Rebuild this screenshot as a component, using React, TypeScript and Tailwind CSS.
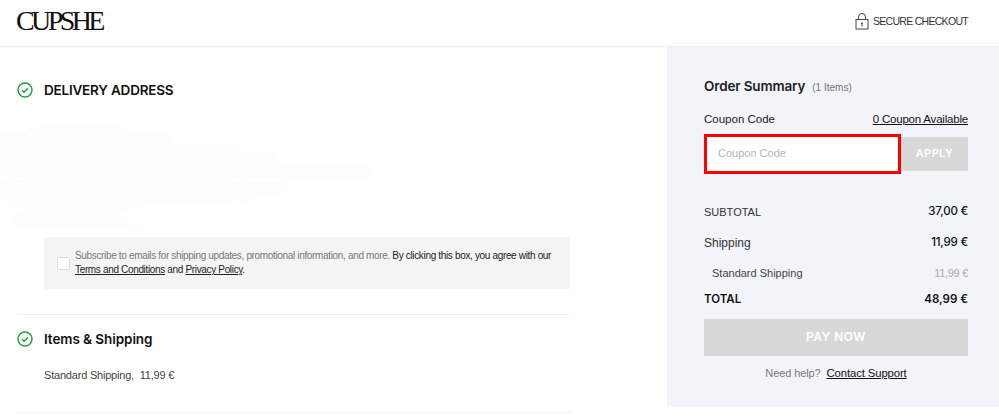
const font = "font-['Liberation_Sans',sans-serif]";
const strong = "font-['Inter',sans-serif]";
const amount = "[&>span:last-child]:font-['Inter',sans-serif] [&>span:last-child]:text-[11.5px] [&>span:last-child]:font-medium [&>span:last-child]:tracking-[-0.2px] [&>span:last-child]:text-[#111]";

function CheckCircle() {
  return (
    <svg width="16" height="16" viewBox="0 0 16 16" fill="none" className="shrink-0">
      <circle cx="8" cy="8" r="7" stroke="#1f9d3a" strokeWidth="1.4" />
      <path d="M5 8.2l2.1 2.1L11 6.2" stroke="#1f9d3a" strokeWidth="1.4" />
    </svg>
  );
}

function LockIcon() {
  return (
    <svg width="14" height="17" viewBox="0 0 14 17" fill="none" className="shrink-0">
      <rect x="1" y="6.5" width="12" height="9.5" stroke="#444" strokeWidth="1" />
      <path d="M3.5 6.5V4a3.5 3.5 0 0 1 7 0v2.5" stroke="#444" strokeWidth="1" />
      <path d="M7 13.5v-2" stroke="#444" strokeWidth="1" />
      <circle cx="7" cy="10.5" r="1" fill="#444" />
    </svg>
  );
}

// faint scribble that hides the address in the reference
function AddressSmudge() {
  return (
    <svg width="374" height="112" viewBox="0 0 374 112" fill="#fdfdfd" className="block">
      <path d="M0 14H24Q26 8 40 8L120 7Q128 8 128 14L170 15Q175 18 174 26L236 27Q240 30 240 34L274 35Q280 38 278 46L366 47Q374 50 373 56Q370 61 360 61L190 62L284 63Q290 66 289 72Q286 76 262 78Q258 83 226 84L200 85Q130 87 128 92Q120 96 115 97L128 98Q130 104 128 107L146 108Q149 112 146 116Q140 118 138 120L30 120Q14 118 14 108L10 100Q8 94 40 91L14 90Q0 86 0 74V60L36 62Q0 58 0 56Z" />
    </svg>
  );
}

function Row({ label, value, className }: { label: string; value: string; className: string }) {
  return (
    <div className={`flex items-center justify-between ${className}`}>
      <span>{label}</span>
      <span>{value}</span>
    </div>
  );
}

export default function App() {
  return (
    <div className={`h-[415px] w-[999px] overflow-hidden bg-white text-[#222] ${font}`}>
      <header className="flex h-[47px] items-center justify-between border-b border-[#eeeeee] pl-4 pr-[31px]">
        <span className="mt-[-4px] font-['Liberation_Serif',serif] text-[28px] leading-none tracking-[-3.6px] text-[#111]">
          CUPSHE
        </span>
        <div className="mt-[-3px] flex items-center gap-[4px] text-[10.5px] tracking-[-0.7px] text-[#333]">
          <LockIcon />
          <span>SECURE CHECKOUT</span>
        </div>
      </header>

      <div className="flex">
        <main className="w-[667px] pl-[17px] pr-[97px]">
          <div className="mt-[35px] flex items-center gap-[11px]">
            <CheckCircle />
            <h2 className={`text-[13.5px] font-semibold leading-4 tracking-[-0.2px] text-[#111] ${strong}`}>DELIVERY ADDRESS</h2>
          </div>
          <div className="-ml-[17px] mt-[20px] h-[112px] overflow-hidden">
            <AddressSmudge />
          </div>
          <div className="ml-[27px] mt-[7px] flex h-[52px] items-center bg-[#f4f4f4] pl-[13px]">
            <span className="h-[13px] w-[13px] shrink-0 rounded-[2px] border border-[#dddddd] bg-white" />
            <p className="ml-[5px] whitespace-nowrap text-[10px] leading-[14px] tracking-[-0.34px] text-[#777]">
              Subscribe to emails for shipping updates, promotional information, and more.{" "}
              <span className="text-[#222]">By clicking this box, you agree with our</span>
              <br />
              <span className="text-[#222]">
                <a className="underline">Terms and Conditions</a> and <a className="underline">Privacy Policy</a>.
              </span>
            </p>
          </div>
          <div className="mt-[25px] border-t border-[#f0f0f0]" />
          <div className="mt-[16px] flex items-center gap-[11px]">
            <CheckCircle />
            <h2 className={`text-[13.5px] font-semibold leading-4 tracking-[-0.07px] text-[#111] ${strong}`}>Items &amp; Shipping</h2>
          </div>
          <p className="ml-[27px] mt-[20px] text-[11px] leading-4 tracking-[-0.2px] text-[#444]">Standard Shipping,&nbsp; 11,99 €</p>
          <div className="mt-[29px] border-t border-[#f0f0f0]" />
        </main>

        <aside className="h-[360px] w-[332px] bg-[#f3f4fa] pl-[37px] pr-[31px] pt-[31px]">
          <div className="flex items-baseline gap-[7px]">
            <h2 className={`text-[13.5px] font-semibold leading-4 tracking-[-0.15px] text-[#222] ${strong}`}>Order Summary</h2>
            <span className="text-[10px] text-[#777]">(1 Items)</span>
          </div>
          <div className="mt-[16px] flex items-center justify-between text-[11.5px] leading-4 text-[#222]">
            <span>Coupon Code</span>
            <a className="tracking-[-0.2px] text-[#111] underline">0 Coupon Available</a>
          </div>
          <div className="mt-[10px] flex h-[34px] items-center">
            <div className="relative h-full flex-1">
              <input
                placeholder="Coupon Code"
                className="h-full w-full bg-white pb-[2px] pl-[14px] text-[11px] outline-none placeholder:text-[#b5b5b5]"
              />
              <span className="pointer-events-none absolute -inset-y-[3px] inset-x-0 border-[3px] border-[#ff0000]" />
            </div>
            <button className={`h-full w-[67px] bg-[#d8d8d8] text-[10.8px] font-semibold tracking-[0.5px] text-white ${strong}`}>
              APPLY
            </button>
          </div>
          <Row label="SUBTOTAL" value="37,00 €" className={`mt-[33px] h-4 text-[11px] text-[#333] ${amount}`} />
          <Row label="Shipping" value="11,99 €" className={`mt-[15px] h-4 text-[12px] text-[#333] ${amount}`} />
          <Row label="Standard Shipping" value="11,99 €" className="mt-[14px] h-4 pl-2 text-[11px] text-[#444] [&>span:last-child]:tracking-[-0.3px] [&>span:last-child]:text-[#aaa]" />
          <Row label="TOTAL" value="48,99 €" className={`mt-[11px] h-4 text-[11.5px] font-semibold text-[#111] ${strong}`} />
          <button className={`mt-[11px] h-[37px] w-full bg-[#d8d8d8] pb-[1px] text-[12px] font-semibold tracking-[0.5px] text-white ${strong}`}>
            PAY NOW
          </button>
          <p className="mt-[9px] text-center text-[11px] leading-4 tracking-[-0.1px] text-[#777]">
            Need help?&nbsp; <a className="text-[11.3px] text-[#111] underline">Contact Support</a>
          </p>
        </aside>
      </div>
    </div>
  );
}
